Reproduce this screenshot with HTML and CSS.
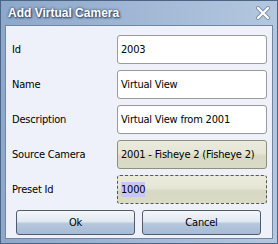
FILE: index.html
```html
<!DOCTYPE html>
<html lang="en">
<head>
    <meta charset="UTF-8">
    <title>Add Virtual Camera</title>
    <link rel="stylesheet" href="styles.css">
</head>
<body>
    <div class="window">
        <div class="titlebar">
            <span class="title">Add Virtual Camera</span>
            <svg class="close" width="16" height="14" viewBox="0 0 16 14">
                <path d="M3 2 L13 12 M13 2 L3 12" stroke="#7d8fa9" stroke-width="4" stroke-linecap="round"/>
                <path d="M3 2 L13 12 M13 2 L3 12" stroke="#fff" stroke-width="2.2" stroke-linecap="round"/>
            </svg>
        </div>
        <div class="panel">
            <div class="form">
                <label>Id</label>
                <div class="field">2003</div>
                <label>Name</label>
                <div class="field">Virtual View</div>
                <label>Description</label>
                <div class="field">Virtual View from 2001</div>
                <label>Source Camera</label>
                <div class="field readonly">2001 - Fisheye 2 (Fisheye 2)</div>
                <label>Preset Id</label>
                <div class="field readonly focus"><span class="sel">1000</span></div>
            </div>
            <div class="buttons">
                <button class="btn">Ok</button>
                <button class="btn">Cancel</button>
            </div>
        </div>
    </div>
</body>
</html>
```

FILE: styles.css
```css
body {
    margin: 0;
    padding: 0;
    background: #fff;
    font-family: "DejaVu Sans Condensed", "DejaVu Sans", sans-serif;
    font-size: 11px;
    letter-spacing: -0.2px;
    color: #000;
}

.window {
    width: 278px;
    height: 244px;
    box-sizing: border-box;
    border: 1px solid #4d6585;
    background: linear-gradient(to right, #8ea8cb, #b4c7df);
    display: flex;
    flex-direction: column;
}

.titlebar {
    height: 24px;
    display: flex;
    align-items: center;
    justify-content: space-between;
    padding: 0 6px 0 7px;
}

.title {
    font-family: "Liberation Sans", Arial, sans-serif;
    font-weight: bold;
    font-size: 12px;
    letter-spacing: 0;
    color: #fff;
    text-shadow: 0 0 3px #2c3f5c, 1px 1px 2px #2c3f5c;
}

.close {
    display: block;
}

.panel {
    flex: 1;
    margin: 0 4px 4px 4px;
    border: 1px solid #6f86a6;
    background: #eef1f9;
    padding: 9px 0 0 6px;
}

.form {
    display: grid;
    grid-template-columns: 105px 150px;
    grid-auto-rows: 29px;
    row-gap: 6px;
}

.form label {
    display: flex;
    align-items: center;
}

.field {
    box-sizing: border-box;
    border: 1px solid #9a9a9a;
    border-radius: 3px;
    background: #fff;
    display: flex;
    align-items: center;
    padding-left: 3px;
    white-space: nowrap;
    overflow: hidden;
}

.readonly {
    border-color: #8f8f7e;
    background: linear-gradient(#ebebde 0%, #e6e6d6 45%, #d8d9c3 55%, #dadbc6 100%);
}

.focus {
    border: 1px dashed #55584a;
}

.sel {
    background: #c6c6f8;
    padding: 1px 0;
}

.buttons {
    display: flex;
    gap: 7px;
    margin: 6px 0 0 4px;
}

.btn {
    width: 119px;
    height: 25px;
    font-family: inherit;
    font-size: 11px;
    letter-spacing: -0.2px;
    color: #000;
    border: 1px solid #4f5c6e;
    border-radius: 3px;
    background: linear-gradient(#f4f6fa 0%, #e2e9f2 45%, #b6c7dd 55%, #a7bbd6 100%);
    padding: 0;
}
```
